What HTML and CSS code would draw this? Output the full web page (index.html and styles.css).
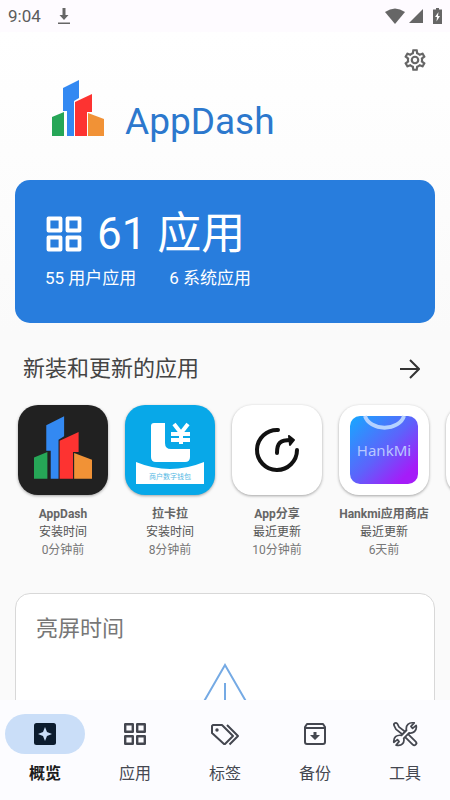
FILE: index.html
```html
<!DOCTYPE html>
<html lang="zh-CN">
<head>
    <meta charset="UTF-8">
    <meta name="viewport" content="width=device-width, initial-scale=1.0">
    <title>AppDash</title>
    <link rel="stylesheet" href="styles.css">
</head>
<body>
    <!-- Shared drawings -->
    <svg class="sprite" aria-hidden="true">
        <symbol id="towers" viewBox="0 0 52 56">
            <path fill="#26a657" d="M0 37 12 32V56H0Z"/>
            <path fill="#3389f2" d="M11 8 27 0V18L22 21V56H15V31H11Z"/>
            <path fill="#fd3331" d="M23 22 40 14V32H35V56H23Z"/>
            <path fill="#f19236" d="M36 33 52 39V56H36Z"/>
        </symbol>
        <symbol id="grid" viewBox="0 0 24 24">
            <path fill="none" stroke="currentColor" stroke-width="2.400" stroke-linejoin="round" d="M2.200 2.200h7.600v7.600H2.200ZM14.200 2.200h7.600v7.600h-7.600ZM2.200 14.200h7.600v7.600H2.200ZM14.200 14.200h7.600v7.600h-7.600Z"/>
        </symbol>
    </svg>

    <div class="screen">
        <header class="status-bar">
            <span class="clock">9:04</span>
            <svg class="download" viewBox="0 0 14 18" width="14" height="18"><path d="M5.500 1h3v7h3L7 13 2.500 8h3ZM1 15.500h12V17H1Z"/></svg>
            <div class="status-icons">
                <svg viewBox="0 0 20 16" width="20" height="16"><path d="M0 4Q10-3 20 4L10 16Z"/></svg>
                <svg viewBox="0 0 14 14" width="14" height="14"><path d="M14 0v14H0Z"/></svg>
                <svg class="battery" viewBox="0 0 9 16" width="9" height="16"><path d="M3 0h3v1.500h3V16H0V1.500h3Z"/><path fill="#fff" d="M5.500 4 2 9h2l-.5 4.500L7 8H5Z"/></svg>
            </div>
        </header>

        <main class="content">
            <div class="toolbar">
                <button class="icon-btn" aria-label="设置">
                    <svg viewBox="0 0 24 24" width="26" height="26"><path d="M19.430 12.980c.04-.32.070-.64.070-.98s-.03-.66-.07-.98l2.110-1.650c.19-.15.240-.42.120-.64l-2-3.460a.5.500 0 0 0-.61-.22l-2.490 1c-.52-.4-1.080-.73-1.690-.98l-.38-2.650A.49.490 0 0 0 14 2h-4c-.25 0-.46.180-.49.420l-.38 2.650c-.61.250-1.170.590-1.690.98l-2.490-1a.5.500 0 0 0-.61.220l-2 3.460c-.13.220-.07.490.12.640l2.110 1.650c-.04.320-.07.650-.07.980s.03.660.070.980l-2.110 1.650c-.19.150-.24.420-.12.640l2 3.460c.12.220.39.300.61.220l2.490-1c.52.400 1.080.730 1.690.980l.38 2.650c.03.240.24.420.49.420h4c.25 0 .46-.18.490-.42l.38-2.650c.61-.25 1.170-.59 1.690-.98l2.490 1c.23.090.49 0 .61-.22l2-3.460c.12-.22.070-.49-.12-.64Zm-1.980-1.710c.04.310.050.520.050.730s-.02.430-.05.730l-.14 1.130.89.700 1.080.840-.7 1.210-1.270-.51-1.040-.42-.9.680c-.43.320-.84.560-1.250.730l-1.060.430-.16 1.130-.2 1.350h-1.400l-.19-1.350-.16-1.130-1.060-.43c-.43-.18-.83-.41-1.230-.71l-.91-.7-1.060.43-1.270.51-.7-1.210 1.080-.84.890-.7-.14-1.130c-.03-.31-.05-.54-.05-.74s.02-.43.050-.73l.14-1.130-.89-.7-1.080-.84.700-1.210 1.270.51 1.040.42.900-.68c.43-.32.840-.56 1.250-.73l1.060-.43.160-1.130.2-1.350h1.390l.19 1.350.16 1.130 1.060.43c.43.180.83.410 1.230.71l.91.700 1.060-.43 1.270-.51.700 1.210-1.070.85-.89.700ZM12 8a4 4 0 1 0 0 8 4 4 0 0 0 0-8Zm0 6a2 2 0 1 1 0-4 2 2 0 0 1 0 4Z"/></svg>
                </button>
            </div>
            <div class="brand">
                <svg class="brand-logo" width="52" height="56"><use href="#towers"/></svg>
                <h1>AppDash</h1>
            </div>

            <section class="summary">
                <div class="total">
                    <svg width="38" height="38"><use href="#grid"/></svg>
                    <span>61 应用</span>
                </div>
                <div class="counts"><span>55 用户应用</span><span>6 系统应用</span></div>
            </section>

            <div class="section-head">
                <h2>新装和更新的应用</h2>
                <button class="icon-btn" aria-label="更多">
                    <svg viewBox="0 0 20 20" width="20" height="20"><path fill="none" stroke="#333" stroke-width="2" d="M0 10h18.500M10 1l9 9-9 9"/></svg>
                </button>
            </div>

            <div class="app-list">
                <article class="app">
                    <div class="tile tile-dark"><svg width="58" height="63"><use href="#towers"/></svg></div>
                    <h3>AppDash</h3>
                    <p>安装时间</p>
                    <p class="when">0分钟前</p>
                </article>
                <article class="app">
                    <div class="tile tile-cyan">
                        <svg viewBox="0 0 90 90" width="90" height="90">
                            <path fill="#fff" d="M29 18h11v20q0 6 6 6h19v8q0 5-5 5H31q-5 0-5-5V21q0-3 3-3Z"/>
                            <path fill="none" stroke="#fff" stroke-width="4" d="m49 19 7 9 7-9M56 27v12M46 29h19M46 35h19"/>
                            <path fill="#fff" d="M11 57q34 14 68 0v22H11Z"/>
                            <text class="wallet-label" x="45" y="74" text-anchor="middle">商户数字钱包</text>
                        </svg>
                    </div>
                    <h3>拉卡拉</h3>
                    <p>安装时间</p>
                    <p class="when">8分钟前</p>
                </article>
                <article class="app">
                    <div class="tile">
                        <svg viewBox="0 0 90 90" width="90" height="90" fill="none" stroke="#111" stroke-width="4" stroke-linecap="round"><path d="M46 25A20 20 0 1 0 65 45M45 48C45 38 48 35 59 35"/><path fill="#111" stroke-width="2" stroke-linejoin="round" d="m57 31 5 4-4 5Z"/></svg>
                    </div>
                    <h3>App分享</h3>
                    <p>最近更新</p>
                    <p class="when">10分钟前</p>
                </article>
                <article class="app">
                    <div class="tile">
                        <svg viewBox="0 0 90 90" width="90" height="90">
                            <defs><linearGradient id="shop" x1="0" y1="0" x2="1" y2="1"><stop offset="0" stop-color="#16a9ff"/><stop offset=".5" stop-color="#5e62fb"/><stop offset=".85" stop-color="#a51cf8"/></linearGradient></defs>
                            <rect x="11" y="11" width="68" height="68" rx="10" fill="url(#shop)"/>
                            <path fill="none" stroke="#b5d2ff" stroke-width="4" d="M26 11a20 15 0 0 0 39 0"/>
                            <text class="shop-label" x="45" y="51" text-anchor="middle">HankMi</text>
                        </svg>
                    </div>
                    <h3>Hankmi应用商店</h3>
                    <p>最近更新</p>
                    <p class="when">6天前</p>
                </article>
                <article class="app"><div class="tile"></div></article>
            </div>

            <section class="screen-time">
                <h2>亮屏时间</h2>
                <svg class="warning" viewBox="0 0 64 56" width="64" height="56" fill="none" stroke="#75aae4" stroke-width="2"><path d="M32 2 62 54H2Z"/><path d="M32 20v18M32 43v4"/></svg>
            </section>
        </main>

        <nav class="bottom-nav">
            <a href="#" class="active">
                <span class="pill"><svg viewBox="0 0 24 24" width="24" height="24"><rect x="1" y="1" width="22" height="22" rx="2.500" fill="#0c1c2e"/><path fill="#cadef8" d="m12 5 2 5 5 2-5 2-2 5-2-5-5-2 5-2Z"/></svg></span>
                <span>概览</span>
            </a>
            <a href="#">
                <span class="pill"><svg width="24" height="24"><use href="#grid"/></svg></span>
                <span>应用</span>
            </a>
            <a href="#">
                <span class="pill"><svg viewBox="0 0 30 24" width="30" height="24" fill="none" stroke="currentColor" stroke-width="2" stroke-linejoin="round"><path d="M3 3h9l11 11-8 8h-1L2 11V4Z"/><path d="m17 3 11 11-8.500 8.500"/><circle cx="7" cy="8" r="1.700" fill="currentColor" stroke="none"/></svg></span>
                <span>标签</span>
            </a>
            <a href="#">
                <span class="pill"><svg viewBox="0 0 24 24" width="24" height="24" fill="none" stroke="currentColor" stroke-width="2" stroke-linejoin="round"><path d="M2 5 4 2h16l2 3v15q0 2-2 2H4q-2 0-2-2ZM2 6h20"/><path fill="currentColor" stroke="none" d="M10.500 10h3v3H17l-5 5-5-5h3.500Z"/></svg></span>
                <span>备份</span>
            </a>
            <a href="#">
                <span class="pill">
                    <svg viewBox="0 0 24 24" width="26" height="26" fill="none" stroke="currentColor" stroke-linecap="round">
                        <path stroke-width="5" d="m3.500 3.500 1.500 3 7 5.500"/>
                        <path stroke-width="5.500" d="m14 14 6.500 6.500"/>
                        <path stroke="#fcfcff" stroke-width="1.800" d="m3.500 3.500 1.500 3 7 5.500"/>
                        <path stroke="#fcfcff" stroke-width="2.200" d="m14 14 6.500 6.500"/>
                        <path stroke-width="4.600" d="M7.500 16.500l9-9"/>
                        <path fill="#fcfcff" stroke-width="1.600" stroke-linejoin="round" d="m8.800 13.300 4.600-4.600q-.8-3.600 1.300-5.600T20.500 1.800L17.500 5l1.500 1.800 3.300-2.700q.7 3.600-1.500 5.600t-5 1.300l-5 5q.8 3.200-1.200 5.200T3.800 22.200L6.500 19 5 17.200l-3.300 2.500q-.4-3.400 1.600-5.200t5.500-1.200Z"/>
                    </svg>
                </span>
                <span>工具</span>
            </a>
        </nav>
    </div>
</body>
</html>
```

FILE: styles.css
```css
* {
    box-sizing: border-box;
}

body {
    margin: 0;
    font-family: Roboto, "Noto Sans CJK SC", sans-serif;
    color: #444;
    background: #fbfbfb;
}

h1, h2, h3, p {
    margin: 0;
    font-weight: 400;
}

svg {
    display: block;
    flex-shrink: 0;
}

.sprite {
    display: none;
}

.screen {
    display: flex;
    flex-direction: column;
    height: 100vh;
    overflow: hidden;
}

.status-bar {
    display: flex;
    align-items: center;
    flex-shrink: 0;
    height: 32px;
    padding: 0 8px;
    background: #fefbff;
    fill: #666;
}

.clock {
    font-size: 17px;
    color: #5c5c5c;
}

.download {
    margin-left: 16px;
}

.status-icons {
    display: flex;
    align-items: center;
    gap: 4px;
    margin-left: auto;
}

.battery {
    margin-left: 6px;
}

.content {
    flex: 1;
    min-height: 0;
    overflow: hidden;
    background: linear-gradient(#fff, #fafafa 300px);
}

.toolbar {
    display: flex;
    justify-content: flex-end;
    padding: 15px 22px 0;
}

.icon-btn {
    padding: 0;
    border: none;
    background: none;
    fill: #666;
    cursor: pointer;
}

.brand {
    display: flex;
    align-items: flex-start;
    gap: 21px;
    padding: 7px 52px 0;
}

.brand h1 {
    padding-top: 18px;
    font-size: 37px;
    line-height: 48px;
    color: #2c78cd;
}

.summary {
    height: 143px;
    margin: 34px 15px 0;
    padding: 26px 30px;
    border-radius: 15px;
    background: #287ddd;
    color: #fff;
}

.total {
    display: flex;
    align-items: center;
    gap: 14px;
    font-size: 44px;
    line-height: 56px;
}

.counts {
    display: flex;
    gap: 33px;
    font-size: 17px;
    line-height: 32px;
}

.section-head {
    display: flex;
    align-items: center;
    justify-content: space-between;
    padding: 30px 30px 0 23px;
}

.section-head h2 {
    font-size: 22px;
    line-height: 32px;
}

.app-list {
    display: flex;
    gap: 7px;
    padding: 20px 13px 0;
    overflow: hidden;
}

.app {
    flex: 0 0 100px;
    font-size: 12px;
    line-height: 18px;
    text-align: center;
    white-space: nowrap;
    color: #555;
}

.app h3 {
    font-size: 12px;
    line-height: 18px;
    font-weight: 700;
    color: #666;
}

.when {
    color: #777;
}

.tile {
    display: flex;
    align-items: center;
    justify-content: center;
    width: 90px;
    height: 90px;
    margin: 0 auto 10px;
    border-radius: 20px;
    background: #fff;
    box-shadow: 0 1px 3px rgba(0, 0, 0, 0.35);
}

.tile-dark {
    padding-bottom: 5px;
    background: #212121;
}

.tile-cyan {
    background: #08a8e8;
}

.wallet-label {
    font-size: 7px;
    fill: #55b9e4;
}

.shop-label {
    font-family: "Noto Sans", sans-serif;
    font-size: 15px;
    fill: #b9c8ff;
}

.screen-time {
    height: 200px;
    margin: 34px 15px 0;
    padding: 19px 20px;
    border: 1px solid #d8d8d8;
    border-radius: 15px;
    background: #fff;
}

.screen-time h2 {
    font-size: 22px;
    line-height: 32px;
    color: #777;
}

.warning {
    margin: 18px auto 0;
}

.bottom-nav {
    display: flex;
    flex-shrink: 0;
    height: 100px;
    padding-top: 14px;
    background: #fcfcff;
}

.bottom-nav a {
    display: flex;
    flex: 1;
    flex-direction: column;
    align-items: center;
    gap: 8px;
    font-size: 16px;
    line-height: 24px;
    color: #444750;
    text-decoration: none;
}

.pill {
    display: flex;
    align-items: center;
    justify-content: center;
    width: 80px;
    height: 40px;
    border-radius: 20px;
}

.bottom-nav .active {
    font-weight: 700;
    color: #1c1c1c;
}

.active .pill {
    background: #cadef8;
}
```
